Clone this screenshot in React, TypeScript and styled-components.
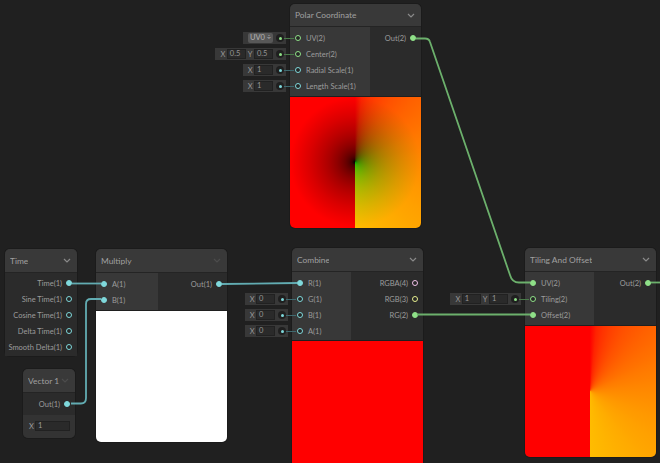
import React from 'react';
import styled, { createGlobalStyle } from 'styled-components';

const V1 = '#7fd8db';
const V2 = '#8fe088';
const V3 = '#e8f090';
const V4 = '#f0c0e8';

const toSrgb = (v: number) => {
  const c = Math.min(1, Math.max(0, v));
  const s = c <= 0.0031308 ? c * 12.92 : 1.055 * Math.pow(c, 1 / 2.4) - 0.055;
  return Math.round(s * 255);
};

// the angle of the polar node lands in the green channel, clamped on the left half
const angleStops = (red: number) => {
  const stops: string[] = [];
  for (let a = 0; a <= 180; a += 6) {
    stops.push(`rgb(${red},${toSrgb(a / 360)},0) ${a}deg`);
  }
  stops.push(`rgb(${red},0,0) 180deg`, `rgb(${red},0,0) 360deg`);
  return stops.join(', ');
};

const radiusStops = () => {
  const stops: string[] = [];
  for (let r = 0; r <= 65; r += 3) {
    stops.push(`rgb(${toSrgb(r / 65)},0,0) ${r}px`);
  }
  stops.push('rgb(255,0,0) 65px');
  return stops.join(', ');
};

const GlobalStyle = createGlobalStyle`
  html, body {
    margin: 0;
    padding: 0;
    background: #202020;
    overflow: hidden;
  }
`;

const Canvas = styled.div`
  position: relative;
  width: 660px;
  height: 463px;
  overflow: hidden;
  background: #202020;
  font-family: 'Lato', 'Liberation Sans', sans-serif;
  font-size: 7.5px;
  color: #9c9c9c;
`;

const Wires = styled.svg`
  position: absolute;
  left: 0;
  top: 0;
  pointer-events: none;
`;

const Node = styled.div<{ $x: number; $y: number; $w: number }>`
  position: absolute;
  left: ${(p) => p.$x}px;
  top: ${(p) => p.$y}px;
  width: ${(p) => p.$w}px;
  border-radius: 5px;
  background: #2b2b2b;
  box-shadow: 0 0 0 1px #1b1b1b;
`;

const Header = styled.div<{ $h?: number }>`
  display: flex;
  align-items: center;
  justify-content: space-between;
  height: ${(p) => p.$h ?? 23}px;
  padding: 0 5px;
  background: #393939;
  border-bottom: 1px solid #242424;
  border-radius: 5px 5px 0 0;
`;

const Title = styled.div<{ $clip?: number }>`
  font-size: 8.4px;
  color: #a0a0a0;
  white-space: nowrap;
  overflow: hidden;
  ${(p) => (p.$clip ? `width: ${p.$clip}px;` : '')}
`;

const Chevron = styled.svg<{ $dim?: boolean }>`
  width: 8px;
  height: 5px;
  flex: none;
  margin-right: 1px;
  stroke: ${(p) => (p.$dim ? '#4c4c4c' : '#8a8a8a')};
  fill: none;
  stroke-width: 1.2;
`;

const Body = styled.div`
  display: flex;
`;

const Inputs = styled.div<{ $w: number; $pb: number }>`
  width: ${(p) => p.$w}px;
  flex: none;
  padding: 3px 0 ${(p) => p.$pb}px;
  background: #383838;
`;

const Outputs = styled.div<{ $pad?: number }>`
  flex: 1;
  padding: ${(p) => p.$pad ?? 3}px 0 1px;
  background: #2b2b2b;
`;

const InputRow = styled.div`
  position: relative;
  display: flex;
  align-items: center;
  gap: 5.5px;
  height: 16px;
  padding-left: 4.5px;
  white-space: nowrap;
`;

const OutputRow = styled.div`
  display: flex;
  align-items: center;
  justify-content: flex-end;
  gap: 4px;
  height: 16px;
  padding-right: 5px;
  white-space: nowrap;
`;

const Port = styled.span<{ $color: string; $on?: boolean }>`
  width: 6px;
  height: 6px;
  flex: none;
  box-sizing: border-box;
  border-radius: 50%;
  border: 1px solid ${(p) => p.$color};
  background: ${(p) => (p.$on ? p.$color : '#262626')};
`;

const Preview = styled.div<{ $bg: string; $blend?: boolean }>`
  height: 131px;
  background: ${(p) => p.$bg};
  ${(p) => (p.$blend ? 'background-blend-mode: screen;' : '')}
  border-top: 1px solid #1f1f1f;
  border-radius: 0 0 5px 5px;
`;

const Slot = styled.div<{ $dim: string }>`
  position: absolute;
  right: calc(100% + 4px);
  top: 2px;
  display: flex;
  align-items: center;
  height: 12px;
  padding: 0 2px 0 5px;
  background: #383838;
  color: #969696;
  font-size: 7.5px;

  &::after {
    content: '';
    position: absolute;
    left: calc(100% - 6px);
    top: 5.5px;
    width: 14px;
    height: 1px;
    background: ${(p) => p.$dim};
  }
`;

const SlotLabel = styled.span`
  margin-right: 1.5px;
`;

const Field = styled.span<{ $gap?: boolean }>`
  box-sizing: border-box;
  width: 19px;
  height: 10px;
  line-height: 8px;
  padding-left: 2px;
  margin-right: ${(p) => (p.$gap ? 2 : 0)}px;
  font-size: 7.5px;
  background: #2a2a2a;
  border: 1px solid #212121;
`;

const Dropdown = styled.span`
  box-sizing: border-box;
  width: 25px;
  height: 10px;
  line-height: 9px;
  text-align: center;
  font-size: 7.5px;
  background: #585858;
  border-radius: 2px;
  color: #b4b4b4;
`;

const SlotDot = styled.span<{ $color: string }>`
  position: relative;
  z-index: 1;
  display: flex;
  align-items: center;
  justify-content: center;
  width: 8px;
  height: 8px;
  margin-left: 3px;
  border-radius: 50%;
  background: #1f1f1f;

  &::after {
    content: '';
    width: 3px;
    height: 3px;
    border-radius: 50%;
    background: ${(p) => p.$color};
  }
`;

const ControlRow = styled.div`
  display: flex;
  align-items: center;
  gap: 1px;
  height: 22px;
  padding: 0 5px 1px 6px;
  background: #333333;
  border-radius: 0 0 5px 5px;
`;

const WideField = styled(Field)`
  flex: 1;
`;

const VectorSpacer = styled.div`
  height: 2px;
`;

const Arrow = () => (
  <Chevron viewBox="0 0 8 5">
    <path d="M1 1l3 3 3-3" />
  </Chevron>
);

const DimArrow = () => (
  <Chevron $dim viewBox="0 0 8 5">
    <path d="M1 1l3 3 3-3" />
  </Chevron>
);

const dimV1 = '#3f6a70';
const dimV2 = '#4a7a4a';

const NumSlot = ({ x }: { x: string }) => (
  <Slot $dim={dimV1}>
    <SlotLabel>X</SlotLabel>
    <Field>{x}</Field>
    <SlotDot $color={V1} />
  </Slot>
);

const VecSlot = ({ x, y }: { x: string; y: string }) => (
  <Slot $dim={dimV2}>
    <SlotLabel>X</SlotLabel>
    <Field $gap>{x}</Field>
    <SlotLabel>Y</SlotLabel>
    <Field>{y}</Field>
    <SlotDot $color={V2} />
  </Slot>
);

const polarBg = `conic-gradient(from 0deg at 65px 65px, ${angleStops(0)}), radial-gradient(circle at 65px 65px, ${radiusStops()})`;
const tilingBg = `conic-gradient(from 0deg at 65px 65px, ${angleStops(255)})`;

const App = () => (
  <Canvas>
    <GlobalStyle />

    <Node $x={290} $y={4} $w={131}>
      <Header $h={22}>
        <Title>Polar Coordinate</Title>
        <Arrow />
      </Header>
      <Body>
        <Inputs $w={80} $pb={2}>
          <InputRow>
            <Port $color={V2} />
            UV(2)
            <Slot $dim={dimV2}>
              <Dropdown>UV0 ÷</Dropdown>
              <SlotDot $color={V2} />
            </Slot>
          </InputRow>
          <InputRow>
            <Port $color={V2} />
            Center(2)
            <VecSlot x="0.5" y="0.5" />
          </InputRow>
          <InputRow>
            <Port $color={V1} />
            Radial Scale(1)
            <NumSlot x="1" />
          </InputRow>
          <InputRow>
            <Port $color={V1} />
            Length Scale(1)
            <NumSlot x="1" />
          </InputRow>
        </Inputs>
        <Outputs>
          <OutputRow>
            Out(2)
            <Port $color={V2} $on />
          </OutputRow>
        </Outputs>
      </Body>
      <Preview $bg={polarBg} $blend />
    </Node>

    <Node $x={5} $y={249} $w={72}>
      <Header>
        <Title>Time</Title>
        <Arrow />
      </Header>
      <Outputs $pad={2}>
        <OutputRow>
          Time(1)
          <Port $color={V1} $on />
        </OutputRow>
        <OutputRow>
          Sine Time(1)
          <Port $color={V1} />
        </OutputRow>
        <OutputRow>
          Cosine Time(1)
          <Port $color={V1} />
        </OutputRow>
        <OutputRow>
          Delta Time(1)
          <Port $color={V1} />
        </OutputRow>
        <OutputRow>
          Smooth Delta(1)
          <Port $color={V1} />
        </OutputRow>
      </Outputs>
    </Node>

    <Node $x={23} $y={369} $w={52}>
      <Header>
        <Title>Vector 1</Title>
        <DimArrow />
      </Header>
      <Outputs $pad={3}>
        <OutputRow>
          Out(1)
          <Port $color={V1} $on />
        </OutputRow>
        <VectorSpacer />
      </Outputs>
      <ControlRow>
        X<WideField>1</WideField>
      </ControlRow>
    </Node>

    <Node $x={96} $y={249} $w={131}>
      <Header>
        <Title>Multiply</Title>
        <DimArrow />
      </Header>
      <Body>
        <Inputs $w={62} $pb={2}>
          <InputRow>
            <Port $color={V1} $on />
            A(1)
          </InputRow>
          <InputRow>
            <Port $color={V1} $on />
            B(1)
          </InputRow>
        </Inputs>
        <Outputs>
          <OutputRow>
            Out(1)
            <Port $color={V1} $on />
          </OutputRow>
        </Outputs>
      </Body>
      <Preview $bg="#ffffff" />
    </Node>

    <Node $x={292} $y={248} $w={131}>
      <Header>
        <Title $clip={32}>Combine</Title>
        <Arrow />
      </Header>
      <Body>
        <Inputs $w={59} $pb={1}>
          <InputRow>
            <Port $color={V1} $on />
            R(1)
          </InputRow>
          <InputRow>
            <Port $color={V1} />
            G(1)
            <NumSlot x="0" />
          </InputRow>
          <InputRow>
            <Port $color={V1} />
            B(1)
            <NumSlot x="0" />
          </InputRow>
          <InputRow>
            <Port $color={V1} />
            A(1)
            <NumSlot x="0" />
          </InputRow>
        </Inputs>
        <Outputs>
          <OutputRow>
            RGBA(4)
            <Port $color={V4} />
          </OutputRow>
          <OutputRow>
            RGB(3)
            <Port $color={V3} />
          </OutputRow>
          <OutputRow>
            RG(2)
            <Port $color={V2} $on />
          </OutputRow>
        </Outputs>
      </Body>
      <Preview $bg="#ff0000" />
    </Node>

    <Node $x={525} $y={248} $w={131}>
      <Header>
        <Title>Tiling And Offset</Title>
        <Arrow />
      </Header>
      <Body>
        <Inputs $w={69} $pb={2}>
          <InputRow>
            <Port $color={V2} $on />
            UV(2)
          </InputRow>
          <InputRow>
            <Port $color={V2} />
            Tiling(2)
            <VecSlot x="1" y="1" />
          </InputRow>
          <InputRow>
            <Port $color={V2} $on />
            Offset(2)
          </InputRow>
        </Inputs>
        <Outputs>
          <OutputRow>
            Out(2)
            <Port $color={V2} $on />
          </OutputRow>
        </Outputs>
      </Body>
      <Preview $bg={tilingBg} />
    </Node>

    <Wires width="660" height="463" viewBox="0 0 660 463" fill="none" strokeWidth="1.8">
      <g stroke="#62acb2">
        <path d="M72 283.5H101" />
        <path d="M71 403.5H81Q86 403.5 86 398V304Q86 299 91 299H101" />
        <path d="M222 284L297 283" />
      </g>
      <g stroke="#6cb06c">
        <path d="M416 38.5H425Q429 38.5 430 42L510 275Q512 282.5 519 282.5H530" />
        <path d="M417 314.5H530" />
        <path d="M651 282.5H660" />
      </g>
    </Wires>
  </Canvas>
);

export default App;
